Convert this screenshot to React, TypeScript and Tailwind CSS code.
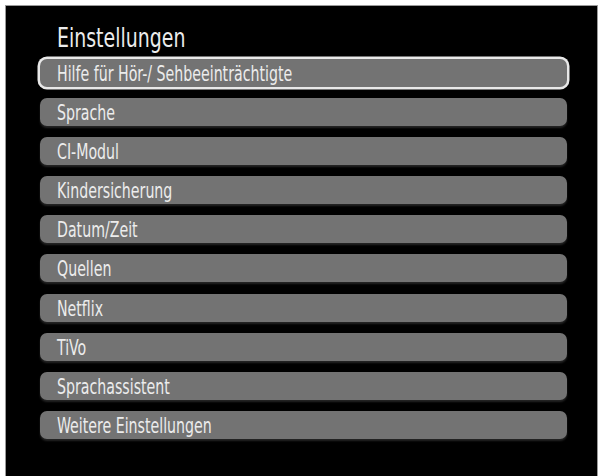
import React from 'react';

const items = [
  'Hilfe für Hör-/ Sehbeeinträchtigte',
  'Sprache',
  'CI-Modul',
  'Kindersicherung',
  'Datum/Zeit',
  'Quellen',
  'Netflix',
  'TiVo',
  'Sprachassistent',
  'Weitere Einstellungen',
];

const App: React.FC = () => {
  return (
    <div className="w-[601px] h-[476px] bg-white pl-[5px] pt-[5px] pr-[3px] overflow-hidden">
      <div
        className="h-[480px] bg-black border border-[#9a9a9a] pl-[34px] pr-[30px] text-[#ececec]"
        style={{ fontFamily: '"DejaVu Sans Condensed", "Liberation Sans Narrow", sans-serif' }}
      >
        {/* Title */}
        <div className="h-[53px] pt-[16px] pl-[17px]">
          <h1 className="inline-block origin-left scale-x-[0.81] text-[26px] leading-[32px] whitespace-nowrap">
            Einstellungen
          </h1>
        </div>

        {/* Menu */}
        <div className="flex flex-col gap-[11.1px]">
          {items.map((item, i) => (
            <div
              key={item}
              className={
                'h-[28px] rounded-[7px] bg-[#737373] flex items-center pl-[17px] shadow-[0_2px_2px_rgba(40,40,40,0.9)] ' +
                (i === 0 ? 'ring-[2.5px] ring-[#e8e8e8]' : '')
              }
            >
              <span className="inline-block origin-left scale-x-[0.75] pt-[3px] text-[21px] leading-[25px] whitespace-nowrap">
                {item}
              </span>
            </div>
          ))}
        </div>
      </div>
    </div>
  );
};

export default App;
